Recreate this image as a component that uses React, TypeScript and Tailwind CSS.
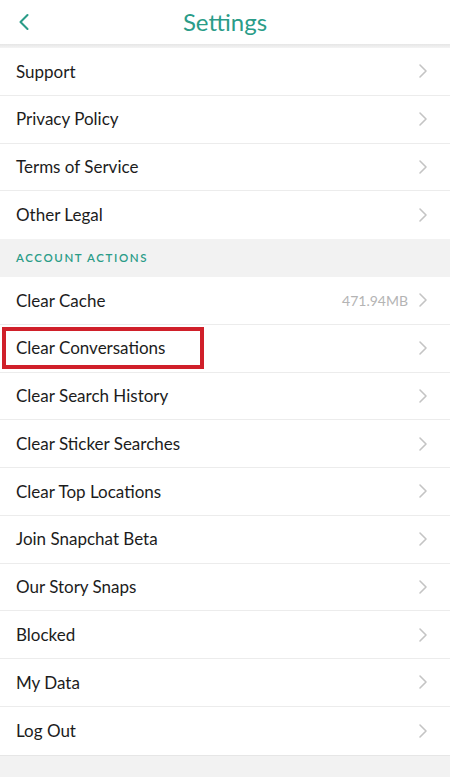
import { ChevronLeft } from "lucide-react";

const legal = ["Support", "Privacy Policy", "Terms of Service", "Other Legal"];
const actions: { label: string; value?: string; boxed?: boolean }[] = [
  { label: "Clear Cache", value: "471.94MB" },
  { label: "Clear Conversations", boxed: true },
  { label: "Clear Search History" },
  { label: "Clear Sticker Searches" },
  { label: "Clear Top Locations" },
  { label: "Join Snapchat Beta" },
  { label: "Our Story Snaps" },
  { label: "Blocked" },
  { label: "My Data" },
  { label: "Log Out" },
];

function Chevron() {
  return (
    <svg width="10" height="16" viewBox="0 0 10 16" className="shrink-0">
      <path d="M2 2l6 6-6 6" fill="none" stroke="#c4c4c4" strokeWidth="1.6" strokeLinecap="round" strokeLinejoin="round" />
    </svg>
  );
}

function Row({ label, value, boxed }: { label: string; value?: string; boxed?: boolean }) {
  return (
    <div className="relative flex h-[47.75px] items-center justify-between border-b border-[#ececec] bg-white pl-4 pr-[22px] last:border-b-0">
      <span className="text-[17px] text-[#1c1c1c]">{label}</span>
      <div className="flex items-center gap-[10px]">
        {value && <span className="text-[14px] text-[#b4b4b4]">{value}</span>}
        <Chevron />
      </div>
      {boxed && (
        <div className="pointer-events-none absolute left-[2px] top-[2px] h-[42px] w-[202px] border-[4px] border-[#d0202a]" />
      )}
    </div>
  );
}

export default function App() {
  return (
    <div className="min-h-[777px] w-[450px] bg-[#f2f2f2]" style={{ fontFamily: "Lato, 'Noto Sans', sans-serif" }}>
      {/* header */}
      <div className="relative flex h-[44px] items-center justify-center bg-white">
        <ChevronLeft className="absolute left-[10px] top-[8px] text-[#2a9c88]" size={28} strokeWidth={1.8} />
        <h1 className="text-[24px] text-[#2a9c88]">Settings</h1>
      </div>
      <div className="h-[4px] bg-gradient-to-b from-[#e6e6e6] to-[#f4f4f4]" />

      <div>
        {legal.map((l) => (
          <Row key={l} label={l} />
        ))}
      </div>

      <div className="flex h-[38px] items-center bg-[#f2f2f2] pl-4">
        <span className="text-[11.5px] font-semibold tracking-[0.14em] text-[#2a9c88]">ACCOUNT ACTIONS</span>
      </div>

      <div className="border-b border-[#e6e6e6]">
        {actions.map((a) => (
          <Row key={a.label} {...a} />
        ))}
      </div>
    </div>
  );
}
